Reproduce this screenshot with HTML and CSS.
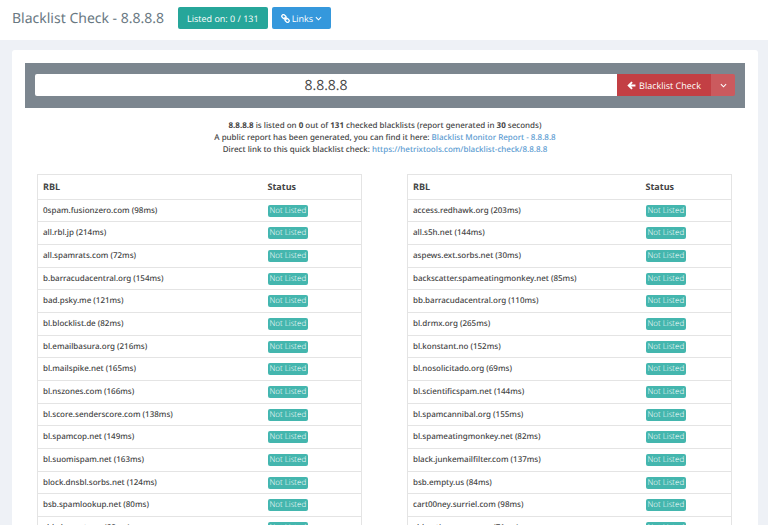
FILE: index.html
```html
<!DOCTYPE html>
<html lang="en">
<head>
    <meta charset="UTF-8">
    <meta name="viewport" content="width=device-width, initial-scale=1.0">
    <title>Blacklist Check - 8.8.8.8</title>
    <link rel="stylesheet" href="styles.css">
</head>
<body>
    <header class="page-header">
        <h1>Blacklist Check - 8.8.8.8</h1>
        <button type="button" class="btn btn-green">Listed on: 0 / 131</button>
        <button type="button" class="btn btn-blue">
            <svg class="icon" viewBox="0 0 16 16" fill="none" stroke="currentColor" stroke-width="2.4"><rect x="1" y="2" width="8" height="5.6" rx="2.8" transform="rotate(45 5 5)"/><rect x="7" y="8.4" width="8" height="5.6" rx="2.8" transform="rotate(45 11 11)"/><path d="M6 6l4 4"/></svg>
            Links
            <svg class="caret" viewBox="0 0 8 8" fill="none" stroke="currentColor" stroke-width="1.2"><path d="M1 2.5l3 3 3-3"/></svg>
        </button>
    </header>

    <main class="panel">
        <form class="search">
            <input type="text" id="target" value="8.8.8.8" aria-label="IP or domain">
            <button type="button" class="check">
                <svg class="icon" viewBox="0 0 16 16" fill="none" stroke="currentColor" stroke-width="3.4"><path d="M9 2L3 8l6 6M3 8h12"/></svg>
                Blacklist Check
            </button>
            <button type="button" class="check-more" aria-label="More options">
                <svg class="caret" viewBox="0 0 8 8" fill="none" stroke="currentColor" stroke-width="1.2"><path d="M1 2.5l3 3 3-3"/></svg>
            </button>
        </form>

        <p class="summary">
            <b>8.8.8.8</b> is listed on <b>0</b> out of <b>131</b> checked blacklists (report generated in <b>30</b> seconds)<br>
            A public report has been generated, you can find it here: <a href="#">Blacklist Monitor Report - 8.8.8.8</a><br>
            Direct link to this quick blacklist check: <a href="#">https://hetrixtools.com/blacklist-check/8.8.8.8</a>
        </p>

        <div class="results">
            <table class="results-left">
                <thead>
                    <tr><th class="rbl">RBL</th><th>Status</th></tr>
                </thead>
                <tbody id="left"></tbody>
            </table>
            <table class="results-right">
                <thead>
                    <tr><th class="rbl">RBL</th><th>Status</th></tr>
                </thead>
                <tbody id="right"></tbody>
            </table>
        </div>
    </main>

    <script>
        const left = [
            ['0spam.fusionzero.com', 98],
            ['all.rbl.jp', 214],
            ['all.spamrats.com', 72],
            ['b.barracudacentral.org', 154],
            ['bad.psky.me', 121],
            ['bl.blocklist.de', 82],
            ['bl.emailbasura.org', 216],
            ['bl.mailspike.net', 165],
            ['bl.nszones.com', 166],
            ['bl.score.senderscore.com', 138],
            ['bl.spamcop.net', 149],
            ['bl.suomispam.net', 163],
            ['block.dnsbl.sorbs.net', 124],
            ['bsb.spamlookup.net', 80],
            ['cbl.abuseat.org', 82]
        ];
        const right = [
            ['access.redhawk.org', 203],
            ['all.s5h.net', 144],
            ['aspews.ext.sorbs.net', 30],
            ['backscatter.spameatingmonkey.net', 85],
            ['bb.barracudacentral.org', 110],
            ['bl.drmx.org', 265],
            ['bl.konstant.no', 152],
            ['bl.nosolicitado.org', 69],
            ['bl.scientificspam.net', 144],
            ['bl.spamcannibal.org', 155],
            ['bl.spameatingmonkey.net', 82],
            ['black.junkemailfilter.com', 137],
            ['bsb.empty.us', 84],
            ['cart00ney.surriel.com', 98],
            ['cbl.anti-spam.org.cn', 71]
        ];

        function renderRows(id, rows) {
            document.getElementById(id).innerHTML = rows.map(([host, ms]) =>
                `<tr><td>${host} (${ms}ms)</td><td><span class="label">Not Listed</span></td></tr>`
            ).join('');
        }

        renderRows('left', left);
        renderRows('right', right);
    </script>
</body>
</html>
```
FILE: styles.css
```css
* {
    box-sizing: border-box;
}

body {
    margin: 0;
    font-family: 'Noto Sans', 'Open Sans', sans-serif;
    font-size: 8px;
    font-weight: 500;
    line-height: 12px;
    text-rendering: geometricPrecision;
    color: #444;
    background-color: #eef1f6;
}

button, input {
    font-family: 'Open Sans', sans-serif;
    text-rendering: inherit;
    border: none;
}

button {
    cursor: pointer;
}

.page-header {
    display: flex;
    align-items: center;
    gap: 4px;
    height: 40px;
    padding: 0 12px 4px;
    background-color: #fff;
}

h1 {
    margin: 2px 10px 0 0;
    font-size: 14px;
    line-height: 20px;
    font-weight: 400;
    color: #697882;
}

.btn {
    display: flex;
    align-items: center;
    gap: 2px;
    height: 22px;
    padding: 0 9px;
    font-size: 9px;
    color: #fff;
    border-radius: 2px;
}

.btn-green {
    background-color: #26a69a;
}

.btn-blue {
    background-color: #3598dc;
}

.icon {
    width: 9px;
    height: 9px;
}

.caret {
    width: 7px;
    height: 7px;
}

.panel {
    margin: 10px 10px 0 12px;
    padding: 13px;
    background-color: #fff;
    border-radius: 3px 3px 0 0;
}

.search {
    display: flex;
    padding: 11px 10px 12px;
    background-color: #7c868f;
}

.search input {
    flex: 1;
    min-width: 0;
    height: 22px;
    padding: 0;
    font-size: 14px;
    color: #444;
    text-align: center;
    background-color: #fff;
    border-radius: 2px 0 0 2px;
}

.check, .check-more {
    display: flex;
    align-items: center;
    justify-content: center;
    height: 22px;
    font-size: 9px;
    color: #fff;
}

.check {
    gap: 3px;
    width: 94px;
    padding: 0;
    background-color: #c33f44;
}

.check-more {
    width: 24px;
    padding: 0;
    background-color: #cb5a5e;
    border-radius: 0 2px 2px 0;
}

.summary {
    margin: 12px 0 18px;
    text-align: center;
}

a {
    color: #5b9bd1;
    text-decoration: none;
}

.results {
    display: grid;
    grid-template-columns: 1fr 1fr;
    gap: 45px;
    padding: 0 13px 0 12px;
}

table {
    width: 100%;
    table-layout: fixed;
    border-collapse: collapse;
    border: 1px solid #e4e4e4;
}

th, td {
    height: 23px;
    padding: 0 5px;
    text-align: left;
    border-bottom: 1px solid #e4e4e4;
}

th {
    height: 25px;
    font-family: 'Open Sans', sans-serif;
    font-size: 9px;
    font-weight: 700;
}

tbody tr:nth-child(3n+1) td {
    height: 22px;
}

.results-left .rbl {
    width: 225px;
}

.results-right .rbl {
    width: 233px;
}

.label {
    display: inline-block;
    padding: 0 2px;
    font-family: 'Open Sans', sans-serif;
    font-weight: 300;
    color: #fff;
    background-color: #44b6ae;
    border-radius: 2px;
}
```
